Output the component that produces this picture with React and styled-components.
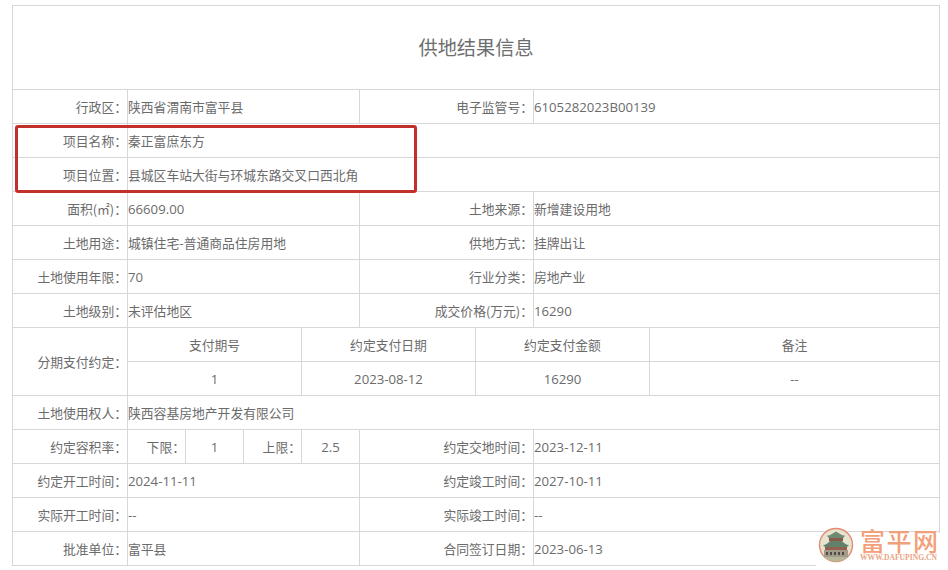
import React from "react";
import styled, { createGlobalStyle } from "styled-components";

const Global = createGlobalStyle`
  html, body { margin: 0; padding: 0; background: #fff; overflow: hidden; }
`;

const Page = styled.div`
  position: relative;
  width: 948px;
  height: 570px;
  overflow: hidden;
  padding: 5px 0 0 12px;
  box-sizing: border-box;
  font-family: "Noto Sans CJK SC", "Noto Sans", sans-serif;
  color: #6b6b6b;
`;

const Table = styled.table`
  width: 927px;
  table-layout: fixed;
  border-collapse: collapse;
  font-size: 12.8px;
`;

const Cell = styled.td`
  height: 33px;
  padding: 0;
  border: 1px solid #d5d7da;
  box-sizing: content-box;
  white-space: nowrap;
  line-height: 18px;
  text-align: ${(p) => p.$align || "left"};
  font-family: ${(p) =>
    p.$latin ? '"Open Sans", "Noto Sans CJK SC", sans-serif' : "inherit"};
  font-size: ${(p) => (p.$latin ? "13.2px" : "inherit")};
`;

const TitleCell = styled.td`
  height: 81px;
  padding: 0 0 2px;
  border: 1px solid #d5d7da;
  text-align: center;
  font-size: 19.2px;
  color: #6e6e6e;
`;

const Highlight = styled.div`
  position: absolute;
  left: 15px;
  top: 125px;
  width: 396px;
  height: 62px;
  border: 3px solid #c3302c;
  border-radius: 3px;
`;

const Watermark = styled.div`
  position: absolute;
  left: 816px;
  top: 533px;
  width: 132px;
  height: 37px;
  background: #fff;
`;

const Seal = styled.svg`
  position: absolute;
  left: 1px;
  top: -8px;
  width: 38px;
  height: 40px;
`;

const BrandName = styled.div`
  position: absolute;
  left: 44px;
  top: -4px;
  height: 22px;
  font-size: 25px;
  line-height: 22px;
  letter-spacing: 1.500px;
  font-weight: 500;
  color: #f2a07a;
  white-space: nowrap;
`;

const BrandUrl = styled.div`
  position: absolute;
  left: 44px;
  top: 20px;
  font-family: "Liberation Serif", serif;
  font-weight: 700;
  font-size: 7.6px;
  line-height: 9px;
  color: #e9a484;
  white-space: nowrap;
`;

const widths = [115, 58, 58, 58, 58, 116, 58, 116, 290];

const Label = ({ children, span, rows }) => (
  <Cell $align="right" colSpan={span} rowSpan={rows}>{children}</Cell>
);
const Value = ({ children, span, latin }) => (
  <Cell colSpan={span} $latin={latin}>{children}</Cell>
);
const Center = ({ children, span, latin }) => (
  <Cell $align="center" colSpan={span} $latin={latin}>{children}</Cell>
);

const isLatin = (s) => /^[0-9A-Za-z.\-]+$/.test(s);

const pairs = (a, b, c, d) => (
  <tr>
    <Label>{a}</Label>
    <Value span={4} latin={isLatin(b)}>{b}</Value>
    <Label span={2}>{c}</Label>
    <Value span={2} latin={isLatin(d)}>{d}</Value>
  </tr>
);

const single = (a, b) => (
  <tr>
    <Label>{a}</Label>
    <Value span={8}>{b}</Value>
  </tr>
);

function SealIcon() {
  return (
    <Seal viewBox="0 0 38 40">
      <circle cx="19" cy="20" r="16.5" fill="#e6e3cf" stroke="#e58a72" strokeWidth="1.4" />
      <path d="M5 30c4 5 9 6.500 14 6.500s10-1.500 14-6.500z" fill="#b7b59a" />
      <path d="M10 10.500c3 .5 5-2 9-4 4 2 6 4.500 9 4l-2 3H12z" fill="#6f8a70" />
      <rect x="12" y="13" width="14" height="3" fill="#8a5a4c" />
      <path d="M6 20c3 0 5-2 7-4h12c2 2 4 4 7 4l-2 2H8z" fill="#62806a" />
      <rect x="8" y="22" width="22" height="3" fill="#94604f" />
      <rect x="7" y="25" width="24" height="7" fill="#a49a8a" />
      <path d="M9 27h2v3H9zm4 0h2v3h-2zm4 0h2v3h-2zm4 0h2v3h-2zm4 0h2v3h-2z" fill="#4f4a44" />
    </Seal>
  );
}

export default function App() {
  return (
    <Page>
      <Global />
      <Table>
        <colgroup>
          {widths.map((w, i) => <col key={i} style={{ width: w }} />)}
        </colgroup>
        <tbody>
          <tr><TitleCell colSpan={9}>供地结果信息</TitleCell></tr>
          {pairs("行政区：", "陕西省渭南市富平县", "电子监管号：", "6105282023B00139")}
          {single("项目名称：", "秦正富庶东方")}
          {single("项目位置：", "县城区车站大街与环城东路交叉口西北角")}
          {pairs("面积(㎡)：", "66609.00", "土地来源：", "新增建设用地")}
          {pairs("土地用途：", "城镇住宅-普通商品住房用地", "供地方式：", "挂牌出让")}
          {pairs("土地使用年限：", "70", "行业分类：", "房地产业")}
          {pairs("土地级别：", "未评估地区", "成交价格(万元)：", "16290")}
          <tr>
            <Label rows={2}>分期支付约定：</Label>
            <Center span={3}>支付期号</Center>
            <Center span={2}>约定支付日期</Center>
            <Center span={2}>约定支付金额</Center>
            <Center>备注</Center>
          </tr>
          <tr>
            <Center span={3} latin>1</Center>
            <Center span={2} latin>2023-08-12</Center>
            <Center span={2} latin>16290</Center>
            <Center latin>--</Center>
          </tr>
          {single("土地使用权人：", "陕西容基房地产开发有限公司")}
          <tr>
            <Label>约定容积率：</Label>
            <Label>下限：</Label>
            <Center latin>1</Center>
            <Label>上限：</Label>
            <Center latin>2.5</Center>
            <Label span={2}>约定交地时间：</Label>
            <Value span={2} latin>2023-12-11</Value>
          </tr>
          {pairs("约定开工时间：", "2024-11-11", "约定竣工时间：", "2027-10-11")}
          {pairs("实际开工时间：", "--", "实际竣工时间：", "--")}
          {pairs("批准单位：", "富平县", "合同签订日期：", "2023-06-13")}
        </tbody>
      </Table>
      <Highlight />
      <Watermark>
        <SealIcon />
        <BrandName>富平网</BrandName>
        <BrandUrl>WWW.DAFUPING.CN</BrandUrl>
      </Watermark>
    </Page>
  );
}
